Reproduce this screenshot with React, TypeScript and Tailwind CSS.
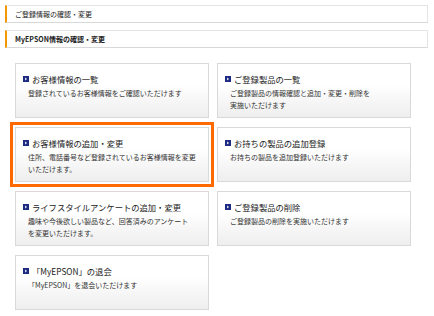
import React from "react";

const Icon = () => (
  <svg width="6" height="6" viewBox="0 0 6 6" className="shrink-0">
    <rect x="0" y="0" width="6" height="6" fill="#1d2a82" />
    <path d="M2.2 1.5 L4 3 L2.2 4.5 Z" fill="#ffffff" />
  </svg>
);

type CardProps = {
  title: string;
  lines: string[];
  highlight?: boolean;
};

const Card = ({ title, lines, highlight }: CardProps) => (
  <div className="relative h-[55px]">
    {highlight && (
      <div className="absolute -inset-[5px] border-[3px] border-[#ff6a00]" />
    )}
    <div className="relative h-full border border-[#d9d9d9] bg-gradient-to-b from-white from-40% to-[#eeeeee] pl-[7px] pt-[9px]">
      <div className="flex items-center gap-[3px] h-[12px]">
        <Icon />
        <span className="text-[8.3px] leading-[12px] text-[#222222] whitespace-nowrap">
          {title}
        </span>
      </div>
      <div className="mt-[2px] pl-[5px] text-[7px] leading-[12px] text-[#333333] whitespace-nowrap">
        {lines.map((l, i) => (
          <div key={i}>{l}</div>
        ))}
      </div>
    </div>
  </div>
);

const Header = ({ text, bold }: { text: string; bold?: boolean }) => (
  <div className="h-[18px] flex items-center border border-[#e4e4e4] border-b-[#d8d8d8] border-l-[2px] border-l-[#f39800] pl-[8px] bg-white">
    <span
      className={
        "text-[7px] text-[#222222] " + (bold ? "font-bold" : "font-normal")
      }
    >
      {text}
    </span>
  </div>
);

export default function App() {
  return (
    <div
      className="w-[434px] h-[316px] bg-white overflow-hidden pt-[5px] pl-[5px] pr-[6px]"
      style={{ fontFamily: '"Noto Sans CJK JP", "Noto Sans", sans-serif' }}
    >
      <Header text="ご登録情報の確認・変更" />
      <div className="mt-[7px]">
        <Header text="MyEPSON情報の確認・変更" bold />
      </div>
      <div className="mt-[15px] ml-[10px] grid grid-cols-[194px_194px] gap-x-[8px] gap-y-[9px]">
        <Card
          title="お客様情報の一覧"
          lines={["登録されているお客様情報をご確認いただけます"]}
        />
        <Card
          title="ご登録製品の一覧"
          lines={["ご登録製品の情報確認と追加・変更・削除を", "実施いただけます"]}
        />
        <Card
          title="お客様情報の追加・変更"
          lines={["住所、電話番号など登録されているお客様情報を変更", "いただけます。"]}
          highlight
        />
        <Card
          title="お持ちの製品の追加登録"
          lines={["お持ちの製品を追加登録いただけます"]}
        />
        <Card
          title="ライフスタイルアンケートの追加・変更"
          lines={["趣味や今後欲しい製品など、回答済みのアンケート", "を変更いただけます。"]}
        />
        <Card
          title="ご登録製品の削除"
          lines={["ご登録製品の削除を実施いただけます"]}
        />
        <Card
          title="「MyEPSON」の退会"
          lines={["「MyEPSON」を退会いただけます"]}
        />
      </div>
    </div>
  );
}
